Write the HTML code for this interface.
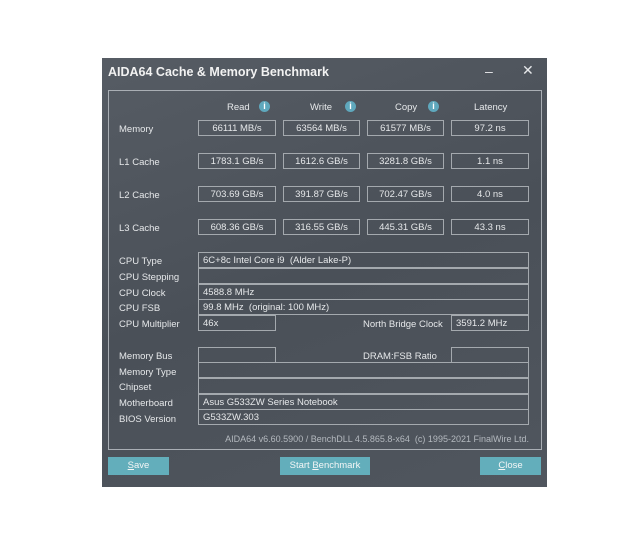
<!DOCTYPE html>
<html><head><style>
body{margin:0;width:640px;height:551px;background:#fff;position:relative;overflow:hidden;font-family:"Liberation Sans",sans-serif;}
.win{position:absolute;left:102px;top:58px;width:445px;height:429px;background:linear-gradient(160deg,#565c64,#4a5058 50%,#50565e);}
.t{position:absolute;color:#e6e8ea;font-size:9.5px;white-space:nowrap;}
.title{position:absolute;left:108px;top:65px;color:#f2f2f2;font-size:12.5px;font-weight:bold;}
.panel{position:absolute;left:108px;top:90px;width:432px;height:358px;border:1px solid #a9aeb4;}
.b{position:absolute;border:1px solid #a4a9ae;box-sizing:border-box;height:16px;color:#e6e8ea;font-size:9.5px;line-height:15px;text-align:center;white-space:nowrap;}
.l{text-align:left;padding-left:4px;}
.info{position:absolute;width:11px;height:11px;border-radius:50%;background:#5fa8bd;color:#fff;font-size:9px;font-weight:bold;text-align:center;line-height:11px;}
.btn{position:absolute;top:457px;height:18px;background:#63aebb;color:#f4f6f6;font-size:9.5px;line-height:18px;text-align:center;}
</style></head><body>
<div class="win"></div>
<div class="title">AIDA64 Cache &amp; Memory Benchmark</div>
<div class="t" style="left:485px;top:63px;font-size:14px">–</div>
<div class="t" style="left:522px;top:62px;font-size:14px">✕</div>
<div class="panel"></div>
<div class="t" style="left:227px;top:102px">Read</div><div class="info" style="left:259px;top:101px">i</div>
<div class="t" style="left:310px;top:102px">Write</div><div class="info" style="left:345px;top:101px">i</div>
<div class="t" style="left:395px;top:102px">Copy</div><div class="info" style="left:428px;top:101px">i</div>
<div class="t" style="left:474px;top:102px">Latency</div>

<div class="t" style="left:119px;top:124px">Memory</div>
<div class="b" style="left:198px;top:120px;width:78px">66111 MB/s</div>
<div class="b" style="left:283px;top:120px;width:77px">63564 MB/s</div>
<div class="b" style="left:367px;top:120px;width:77px">61577 MB/s</div>
<div class="b" style="left:451px;top:120px;width:78px">97.2 ns</div>

<div class="t" style="left:119px;top:157px">L1 Cache</div>
<div class="b" style="left:198px;top:153px;width:78px">1783.1 GB/s</div>
<div class="b" style="left:283px;top:153px;width:77px">1612.6 GB/s</div>
<div class="b" style="left:367px;top:153px;width:77px">3281.8 GB/s</div>
<div class="b" style="left:451px;top:153px;width:78px">1.1 ns</div>

<div class="t" style="left:119px;top:190px">L2 Cache</div>
<div class="b" style="left:198px;top:186px;width:78px">703.69 GB/s</div>
<div class="b" style="left:283px;top:186px;width:77px">391.87 GB/s</div>
<div class="b" style="left:367px;top:186px;width:77px">702.47 GB/s</div>
<div class="b" style="left:451px;top:186px;width:78px">4.0 ns</div>

<div class="t" style="left:119px;top:223px">L3 Cache</div>
<div class="b" style="left:198px;top:219px;width:78px">608.36 GB/s</div>
<div class="b" style="left:283px;top:219px;width:77px">316.55 GB/s</div>
<div class="b" style="left:367px;top:219px;width:77px">445.31 GB/s</div>
<div class="b" style="left:451px;top:219px;width:78px">43.3 ns</div>

<div class="t" style="left:119px;top:256px">CPU Type</div>
<div class="b l" style="left:198px;top:252px;width:331px">6C+8c Intel Core i9 &nbsp;(Alder Lake-P)</div>
<div class="t" style="left:119px;top:272px">CPU Stepping</div>
<div class="b l" style="left:198px;top:268px;width:331px"></div>
<div class="t" style="left:119px;top:288px">CPU Clock</div>
<div class="b l" style="left:198px;top:284px;width:331px">4588.8 MHz</div>
<div class="t" style="left:119px;top:303px">CPU FSB</div>
<div class="b l" style="left:198px;top:299px;width:331px">99.8 MHz &nbsp;(original: 100 MHz)</div>
<div class="t" style="left:119px;top:319px">CPU Multiplier</div>
<div class="b l" style="left:198px;top:315px;width:78px">46x</div>
<div class="t" style="left:363px;top:319px">North Bridge Clock</div>
<div class="b l" style="left:451px;top:315px;width:78px">3591.2 MHz</div>

<div class="t" style="left:119px;top:351px">Memory Bus</div>
<div class="b" style="left:198px;top:347px;width:78px"></div>
<div class="t" style="left:363px;top:351px">DRAM:FSB Ratio</div>
<div class="b" style="left:451px;top:347px;width:78px"></div>
<div class="t" style="left:119px;top:367px">Memory Type</div>
<div class="b" style="left:198px;top:362px;width:331px"></div>
<div class="t" style="left:119px;top:382px">Chipset</div>
<div class="b" style="left:198px;top:378px;width:331px"></div>
<div class="t" style="left:119px;top:398px">Motherboard</div>
<div class="b l" style="left:198px;top:394px;width:331px">Asus G533ZW Series Notebook</div>
<div class="t" style="left:119px;top:414px">BIOS Version</div>
<div class="b l" style="left:198px;top:409px;width:331px">G533ZW.303</div>

<div class="t" style="right:111px;top:434px;color:#b4b9bf;font-size:9px">AIDA64 v6.60.5900 / BenchDLL 4.5.865.8-x64 &nbsp;(c) 1995-2021 FinalWire Ltd.</div>

<div class="btn" style="left:108px;width:61px"><u>S</u>ave</div>
<div class="btn" style="left:280px;width:90px">Start <u>B</u>enchmark</div>
<div class="btn" style="left:480px;width:61px"><u>C</u>lose</div>
</body></html>
